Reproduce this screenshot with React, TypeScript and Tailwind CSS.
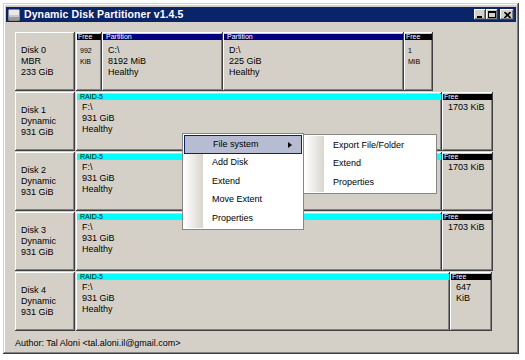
import React from 'react';

type Kind = 'free' | 'part' | 'raid';

type Part = {
  w: number;
  kind: Kind;
  lines: string[];
  small?: boolean;
};

type Disk = {
  name: string;
  type: string;
  size: string;
  parts: Part[];
};

const raid = (w: number): Part => ({ w, kind: 'raid', lines: ['F:\\', '931 GiB', 'Healthy'] });

const DISKS: Disk[] = [
  {
    name: 'Disk 0',
    type: 'MBR',
    size: '233 GiB',
    parts: [
      { w: 26, kind: 'free', lines: ['992', 'KiB'], small: true },
      { w: 121, kind: 'part', lines: ['C:\\', '8192 MiB', 'Healthy'] },
      { w: 181, kind: 'part', lines: ['D:\\', '225 GiB', 'Healthy'] },
      { w: 29, kind: 'free', lines: ['1', 'MiB'], small: true },
    ],
  },
  { name: 'Disk 1', type: 'Dynamic', size: '931 GiB', parts: [raid(366), { w: 51, kind: 'free', lines: ['1703 KiB'] }] },
  { name: 'Disk 2', type: 'Dynamic', size: '931 GiB', parts: [raid(366), { w: 51, kind: 'free', lines: ['1703 KiB'] }] },
  { name: 'Disk 3', type: 'Dynamic', size: '931 GiB', parts: [raid(366), { w: 51, kind: 'free', lines: ['1703 KiB'] }] },
  { name: 'Disk 4', type: 'Dynamic', size: '931 GiB', parts: [raid(374), { w: 42, kind: 'free', lines: ['647', 'KiB'] }] },
];

const HEAD: Record<Kind, { label: string; cls: string }> = {
  free: { label: 'Free', cls: 'bg-black text-white pl-[1px]' },
  part: { label: 'Partition', cls: 'bg-[#000080] text-white pl-[3px]' },
  raid: { label: 'RAID-5', cls: 'bg-[#00ffff] text-black pl-[3px]' },
};

const raised =
  'shadow-[inset_-1px_-1px_0_#404040,inset_1px_1px_0_#ffffff,inset_-2px_-2px_0_#808080]';

function PartBox({ part, first }: { part: Part; first: boolean }) {
  const head = HEAD[part.kind];
  return (
    <div className={`h-full flex flex-col ${raised}`} style={{ width: part.w }}>
      <div className={`mx-[1px] mt-[2px] h-[6px] text-[7px] leading-[6px] overflow-hidden ${head.cls}`}>
        {head.label}
      </div>
      <div
        className={`flex flex-col ${first ? 'pt-[5px]' : 'pt-[2px]'} ${
          part.small ? 'text-[7px] leading-[11px] pl-[4px]' : 'text-[9px] leading-[11px] pl-[6px]'
        }`}
      >
        {part.lines.map((l) => (
          <span key={l}>{l}</span>
        ))}
      </div>
    </div>
  );
}

function TitleButton({ children }: { children: React.ReactNode }) {
  return (
    <div className={`w-[12px] h-[11px] bg-[#d4d0c8] flex items-center justify-center ${raised}`}>
      {children}
    </div>
  );
}

function MenuItem({ label, active, arrow }: { label: string; active?: boolean; arrow?: boolean }) {
  return (
    <div
      className={`relative h-[18.5px] flex items-center pl-[28px] ${
        active ? 'bg-[#b6bdd2] border border-[#0a246a] pl-[27px]' : ''
      }`}
    >
      {label}
      {arrow && (
        <svg className="absolute right-[9px] top-[6px]" width="4" height="6" viewBox="0 0 4 6">
          <path d="M0 0 L4 3 L0 6 Z" fill="#000" />
        </svg>
      )}
    </div>
  );
}

export default function App() {
  return (
    <div className="relative w-[525px] h-[360px] bg-white pt-[3px] pl-[3px] text-black font-['Liberation_Sans',Arial,sans-serif]">
      {/* Window */}
      <div className="w-[516px] h-[351px] bg-[#d4d0c8] p-[3px] pt-[4px] flex flex-col shadow-[inset_-1px_-1px_0_#404040,inset_1px_1px_0_#d4d0c8,inset_-2px_-2px_0_#808080,inset_2px_2px_0_#ffffff]">
        {/* Title bar */}
        <div className="h-[15px] bg-[#0a246a] flex items-center pl-[2px] pr-[2px]">
          <svg width="12" height="12" viewBox="0 0 12 12">
            <rect x="0.5" y="0.5" width="11" height="11" rx="1" fill="#c8c8c8" stroke="#8a8a8a" />
            <rect x="1" y="1" width="10" height="5" fill="#e8e8e8" />
            <rect x="1" y="8" width="10" height="3" fill="#9a9a9a" />
          </svg>
          <span className="ml-[4px] text-white font-bold text-[10.5px] leading-none tracking-[0.1px]">
            Dynamic Disk Partitioner v1.4.5
          </span>
          <div className="ml-auto flex items-center">
            <TitleButton>
              <svg width="6" height="7" viewBox="0 0 6 7">
                <rect x="0" y="5" width="5" height="2" fill="#000" />
              </svg>
            </TitleButton>
            <TitleButton>
              <svg width="8" height="7" viewBox="0 0 8 7">
                <rect x="0.5" y="0.5" width="7" height="6" fill="none" stroke="#000" />
                <rect x="0" y="0" width="8" height="2" fill="#000" />
              </svg>
            </TitleButton>
            <div className="w-[2px]" />
            <div className={`w-[14px] h-[11px] bg-[#d4d0c8] flex items-center justify-center ${raised}`}>
              <svg width="7" height="6" viewBox="0 0 7 6">
                <path d="M0.5 0 L6.5 6 M6.5 0 L0.5 6" stroke="#000" strokeWidth="1.6" />
              </svg>
            </div>
          </div>
        </div>

        {/* Disks */}
        <div className="flex flex-col gap-[1px] pt-[10px] pl-[9px]">
          {DISKS.map((d, i) => (
            <div key={d.name} className="flex h-[59px]">
              <div
                className={`w-[60px] h-full flex flex-col justify-center pl-[6px] text-[9px] leading-[11px] ${raised}`}
              >
                <span>{d.name}</span>
                <span>{d.type}</span>
                <span>{d.size}</span>
              </div>
              <div className="ml-[1px] flex h-full">
                {d.parts.map((p, j) => (
                  <PartBox key={j} part={p} first={i === 0} />
                ))}
              </div>
            </div>
          ))}
        </div>

        <div className="pl-[9px] mt-[7px] text-[9px] leading-[11px]">
          Author: Tal Aloni &lt;tal.aloni.il@gmail.com&gt;
        </div>
      </div>

      {/* Context menu */}
      <div className="absolute left-[182px] top-[133px] w-[122px] bg-white border border-[#868686] p-[1px] text-[9px]">
        <div className="absolute left-[1px] top-[1px] bottom-[1px] w-[19px] bg-gradient-to-r from-white to-[#d9d6cf]" />
        <div className="relative">
          <MenuItem label="File system" active arrow />
          <MenuItem label="Add Disk" />
          <MenuItem label="Extend" />
          <MenuItem label="Move Extent" />
          <MenuItem label="Properties" />
        </div>
      </div>

      {/* Submenu */}
      <div className="absolute left-[303px] top-[134px] w-[134px] bg-white border border-[#868686] p-[1px] text-[9px]">
        <div className="absolute left-[1px] top-[1px] bottom-[1px] w-[19px] bg-gradient-to-r from-white to-[#d9d6cf]" />
        <div className="relative">
          <MenuItem label="Export File/Folder" />
          <MenuItem label="Extend" />
          <MenuItem label="Properties" />
        </div>
      </div>
    </div>
  );
}
